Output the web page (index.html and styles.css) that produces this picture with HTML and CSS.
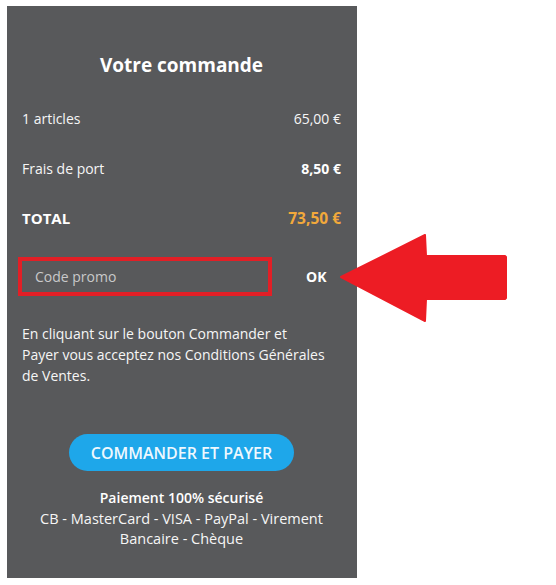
FILE: index.html
```html
<!DOCTYPE html>
<html lang="fr">
  <head>
    <meta charset="UTF-8" />
    <meta name="viewport" content="width=device-width, initial-scale=1.0" />
    <title>Votre commande</title>
    <link rel="stylesheet" href="styles.css">
  </head>
  <body>
    <div id="order-box">
      <h2>Votre commande</h2>

      <div class="row">
        <span>1 articles</span>
        <span>65,00 €</span>
      </div>
      <div class="row">
        <span>Frais de port</span>
        <span class="bold">8,50 €</span>
      </div>
      <div class="row total">
        <span>TOTAL</span>
        <span class="price">73,50 €</span>
      </div>

      <div id="promo">
        <input type="text" placeholder="Code promo" autocomplete="off" />
        <button id="ok">OK</button>
      </div>

      <p class="terms">
        En cliquant sur le bouton Commander et<br />
        Payer vous acceptez nos Conditions Générales<br />
        de Ventes.
      </p>

      <div class="actions">
        <button id="submit">COMMANDER ET PAYER</button>
      </div>

      <div class="payment">
        <strong>Paiement 100% sécurisé</strong><br />
        CB - MasterCard - VISA - PayPal - Virement<br />
        Bancaire - Chèque
      </div>
    </div>

    <!-- annotation arrow -->
    <svg class="arrow" width="168" height="90" viewBox="0 0 168 90">
      <polygon
        points="1,43 85,1 86,22 165,22 166,23 166,64 165,65 86,65 85,87"
        fill="#ed1c24"
        stroke="#ed1c24"
        stroke-width="2"
        stroke-linejoin="round"
      />
    </svg>
  </body>
</html>
```

FILE: styles.css
```css
body {
  margin: 0;
  background: #fff;
  font-family: "Open Sans", "DejaVu Sans", sans-serif;
}

#order-box {
  margin: 6px 0 0 7px;
  width: 350px;
  height: 572px;
  box-sizing: border-box;
  padding: 47px 16px 0 15px;
  background: #58595b;
  color: #f6f6f6;
}

#order-box h2 {
  margin: 0 0 16px;
  font-size: 19px;
  line-height: 24px;
  text-align: center;
  color: #fff;
}

.row {
  display: flex;
  justify-content: space-between;
  align-items: center;
  height: 50px;
  font-size: 14px;
}

.row .bold {
  font-weight: bold;
  color: #fff;
}

.total {
  font-size: 15px;
  font-weight: bold;
  color: #fff;
}

.total .price {
  font-size: 15.5px;
  color: #f2a93b;
}

#promo {
  display: flex;
  align-items: center;
  margin: 14px 0 0 -4px;
}

#promo input {
  width: 254px;
  height: 39px;
  box-sizing: border-box;
  border: 4px solid #e21f26;
  padding: 0 13px;
  background: transparent;
  color: #fff;
  font-family: inherit;
  font-size: 14px;
  outline: none;
}

#promo input::placeholder {
  color: #c9c9ca;
}

#ok {
  margin-left: 34px;
  border: none;
  background: none;
  color: #fff;
  font-family: inherit;
  font-size: 14px;
  font-weight: bold;
  padding: 0;
}

.terms {
  margin: 27px 0 0;
  font-size: 14px;
  line-height: 21px;
}

.actions {
  display: flex;
  justify-content: center;
  margin-top: 48px;
}

#submit {
  width: 225px;
  height: 37px;
  border: none;
  border-radius: 19px;
  background: #1ea7ea;
  color: #eef8fe;
  font-family: inherit;
  font-size: 16px;
  font-weight: 600;
}

.payment {
  margin-top: 17px;
  text-align: center;
  font-size: 14.5px;
  line-height: 20.5px;
}

.payment strong {
  font-size: 14px;
  font-weight: 600;
  color: #fff;
}

.arrow {
  position: absolute;
  left: 340px;
  top: 234px;
}
```
